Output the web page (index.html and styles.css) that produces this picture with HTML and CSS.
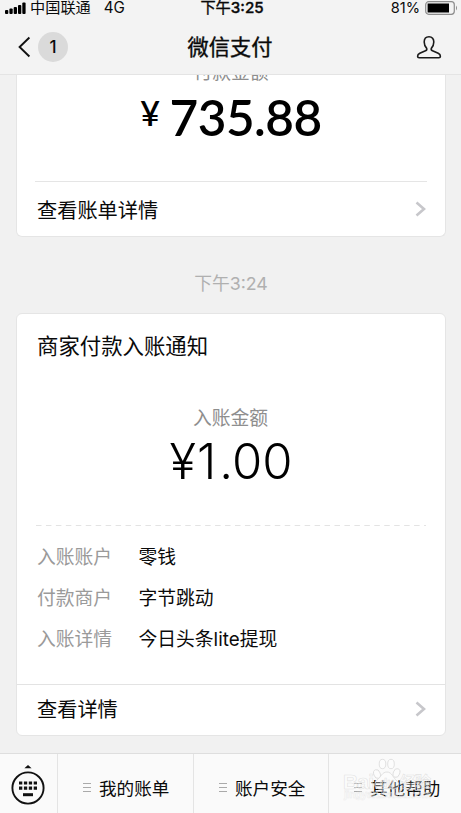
FILE: index.html
```html
<!DOCTYPE html>
<html lang="zh-CN">
<head>
<meta charset="utf-8">
<title>微信支付</title>
<link rel="stylesheet" href="styles.css">
</head>
<body>
<div class="screen">
  <header class="top">
    <div class="status">
      <div class="carrier">
        <svg class="signal" width="21" height="12" viewBox="0 0 21 12"><rect x="0" y="8" width="3.3" height="4" rx="1"/><rect x="4.4" y="6.5" width="3.3" height="5.5" rx="1"/><rect x="8.7" y="5" width="3.3" height="7" rx="1"/><rect x="13" y="3" width="3.3" height="9" rx="1"/><rect x="17.3" y="0.5" width="3.3" height="11.5" rx="1"/></svg>
        <span>中国联通</span><span class="net">4G</span>
      </div>
      <div class="clock">下午<b>3:25</b></div>
      <div class="power"><span>81%</span>
        <svg width="33" height="14" viewBox="0 0 33 14"><rect x=".7" y=".7" width="28.6" height="12.6" rx="3" fill="none" stroke="#8c8c8c" stroke-width="1.2"/><rect x="2.6" y="2.5" width="21.4" height="9" fill="#000"/><path d="M31 4.5q2 2.5 0 5z" fill="#8c8c8c"/></svg>
      </div>
    </div>
    <nav class="nav">
      <div class="back">
        <svg width="13" height="22" viewBox="0 0 13 22"><path d="M11.4 1.5 1.6 11l9.8 9.5" fill="none" stroke="#111" stroke-width="1.9"/></svg>
        <span class="count">1</span>
      </div>
      <h1>微信支付</h1>
      <svg class="person" width="26" height="25" viewBox="0 0 26 25"><path d="M13 1.8C9.8 1.8 8.200 4 8.200 7c0 2.800 1 4.800 2.500 6.400.4 1.200-.1 1.900-1.200 2.400L3.800 18.300C2.200 19.100 1.600 20.200 1.600 21.200q0 1.500 1.500 1.500H22.900q1.500 0 1.500-1.500C24.400 20.200 23.800 19.100 22.200 18.300l-5.700-2.500c-1.100-.5-1.600-1.200-1.200-2.400 1.500-1.600 2.500-3.600 2.500-6.400C17.800 4 16.200 1.800 13 1.800z" fill="none" stroke="#1a1a1a" stroke-width="1.6" stroke-linejoin="round"/></svg>
    </nav>
  </header>
  <main class="feed">
    <section class="card paid">
      <div class="caption">付款金额</div>
      <div class="amount bold"><span class="yen">¥</span>735.88</div>
      <div class="more inset"><span>查看账单详情</span><svg width="12" height="16" viewBox="0 0 12 16"><path d="m1.500 1.500 7.500 6.500L1.500 14.500" fill="none" stroke="#c7c7cb" stroke-width="2.600"/></svg></div>
    </section>
    <time class="stamp">下午3:24</time>
    <section class="card received">
      <h2>商家付款入账通知</h2>
      <div class="caption">入账金额</div>
      <div class="amount light">¥<span class="unit">1</span>.00</div>
      <svg class="dash" width="390" height="1"><path d="M0 .5H390" stroke="#e3e3e3" stroke-dasharray="5.500 4.450"/></svg>
      <dl>
        <dt>入账账户</dt><dd>零钱</dd>
        <dt>付款商户</dt><dd>字节跳动</dd>
        <dt>入账详情</dt><dd>今日头条lite提现</dd>
      </dl>
      <div class="more"><span>查看详情</span><svg width="12" height="16" viewBox="0 0 12 16"><path d="m1.500 1.500 7.500 6.500L1.500 14.500" fill="none" stroke="#c7c7cb" stroke-width="2.600"/></svg></div>
    </section>
  </main>
  <footer class="menu">
    <div class="keys"><svg width="34" height="42" viewBox="0 0 34 42"><path d="M17 1l3.600 3.200h-7.200z" fill="#111"/><circle cx="17" cy="24" r="15.600" fill="none" stroke="#111" stroke-width="1.900"/><path d="M8 19h18M8 24.200h18" stroke="#111" stroke-width="3.200" stroke-dasharray="3.300 1.600"/><path d="M12 30.700h10" stroke="#111" stroke-width="3"/></svg></div>
    <div class="item"><i class="bars"></i>我的账单</div>
    <div class="item"><i class="bars"></i>账户安全</div>
    <div class="item"><i class="bars"></i>其他帮助
      <svg class="mark" width="100" height="54" viewBox="0 0 100 54"><g fill="#fff" fill-opacity=".35" stroke="#dedede" stroke-width=".9"><ellipse cx="34" cy="19" rx="3.200" ry="4.500" transform="rotate(-20 34 19)"/><ellipse cx="39.500" cy="9" rx="3.300" ry="4.700"/><ellipse cx="48" cy="9" rx="3.300" ry="4.700"/><ellipse cx="53.500" cy="18" rx="3.200" ry="4.500" transform="rotate(20 53.500 18)"/><path d="M44 17c-5 0-6 5-10 8-5 5-1 10 5 9 4-1 6-1 10 0 6 1 9-4 5-8-4-3-5-9-10-9z"/></g><g class="marktext"><text x="0" y="34" font-size="21" textLength="31">Bai</text><text x="37" y="32" font-size="12">du</text><text x="57" y="33" font-size="16" textLength="31">经验</text><text class="site" x="1" y="43" font-size="10.500" textLength="87">jingyan.baidu.com</text></g></svg>
    </div>
  </footer>
</div>
</body>
</html>
```
FILE: styles.css
```css
* { box-sizing: border-box; }
body { margin: 0; background: #f1f1f1; color: #0a0a0a; font-family: Inter, "Noto Sans CJK SC", sans-serif; }
h1, h2, dl, dd { margin: 0; font-weight: 400; }
svg { display: block; flex: none; }
.screen { width: 461px; height: 813px; display: flex; flex-direction: column; overflow: hidden; }
.top { height: 75px; flex: none; background: #f3f3f3; border-bottom: 1px solid #e4e4e4; }
.status { height: 16px; display: grid; grid-template-columns: 1fr auto 1fr; align-items: center; font-size: 15.2px; line-height: 16px; }
.carrier { display: flex; align-items: center; padding-left: 5px; }
.signal { margin-right: 4px; }
.net { margin-left: 13px; }
.clock { padding-left: 3px; -webkit-text-stroke: .35px currentColor; }
.clock b { font-weight: 500; }
.power { display: flex; align-items: center; justify-content: flex-end; gap: 5px; padding-right: 3px; font-size: 14.600px; }
.nav { height: 62px; display: grid; grid-template-columns: 1fr auto 1fr; align-items: center; padding: 0 19px 0 18px; }
.back { display: flex; align-items: center; gap: 7px; }
.count { width: 30px; height: 30px; border-radius: 50%; background: #dadada; font-size: 17px; line-height: 30px; text-align: center; font-weight: 500; }
.nav h1 { font-size: 21.200px; line-height: 30px; -webkit-text-stroke: .4px currentColor; }
.person { justify-self: end; }
.feed { flex: 1; min-height: 0; overflow: hidden; padding: 0 15px 0 16px; }
.card { background: #fff; border: 1px solid #e5e5e5; border-radius: 6px; }
.paid { height: 162px; border-top: 0; border-radius: 0 0 6px 6px; display: flex; flex-direction: column; }
.caption { font-size: 18.800px; line-height: 28px; color: #8e8e8e; text-align: center; }
.paid .caption { margin-top: -16px; }
.amount { text-align: center; white-space: nowrap; }
.bold { font-family: Lato, sans-serif; font-size: 49.500px; line-height: 60px; font-weight: 600; letter-spacing: -.5px; color: #000; }
.yen { font-size: 34px; margin-right: 10px; vertical-align: 10px; line-height: 1; }
.more { display: flex; align-items: center; justify-content: space-between; font-size: 20.200px; height: 51px; padding: 0 18px 0 20px; }
.inset { margin: auto 18px 0; padding: 0 0 0 2px; height: 55px; border-top: 1px solid #e5e5e5; }
.stamp { display: block; text-align: center; margin-top: 33px; height: 43px; line-height: 28px; font-size: 17.800px; color: #b0b0b0; }
.received { height: 423px; display: flex; flex-direction: column; }
.received h2 { font-size: 21.400px; line-height: 32px; margin: 16px 0 0 20px; }
.received .caption { margin-top: 43px; padding-right: 1px; }
.light { font-size: 49px; line-height: 58px; font-weight: 300; color: #000; }
.unit { margin: 0 3px 0 1px; }
.dash { margin: 34px 0 0 19px; }
dl { display: grid; grid-template-columns: 101.500px 1fr; grid-auto-rows: 41px; align-items: center; font-size: 18.800px; padding: 9px 0 0 20px; }
dt { color: #9a9a9a; }
.received .more { margin-top: auto; padding-bottom: 3px; border-top: 1px solid #e3e3e3; }
.menu { height: 60px; flex: none; display: grid; grid-template-columns: 58px 136px 135px 1fr; border-top: 1px solid #dedede; background: #fafafa; }
.keys { display: flex; justify-content: center; padding: 10px 1px 0 0; border-right: 1px solid #e4e4e4; }
.item { position: relative; display: flex; align-items: center; padding: 8px 0 0 25px; gap: 8px; font-size: 17.600px; border-right: 1px solid #e4e4e4; white-space: nowrap; }
.item:last-child { border: 0; }
.bars { width: 8px; height: 9px; border: solid #aaa; border-width: 1px 0; background: linear-gradient(#aaa, #aaa) center / 100% 1px no-repeat; }
.mark { position: absolute; left: 14px; top: 1px; }
.marktext { fill: #fff; fill-opacity: .25; stroke: #dcdcdc; stroke-width: .6; stroke-opacity: .8; font-family: "Liberation Sans", "Noto Sans CJK SC", sans-serif; font-weight: 700; }
.site { stroke: #e8e8e8; stroke-width: .5; }
```
